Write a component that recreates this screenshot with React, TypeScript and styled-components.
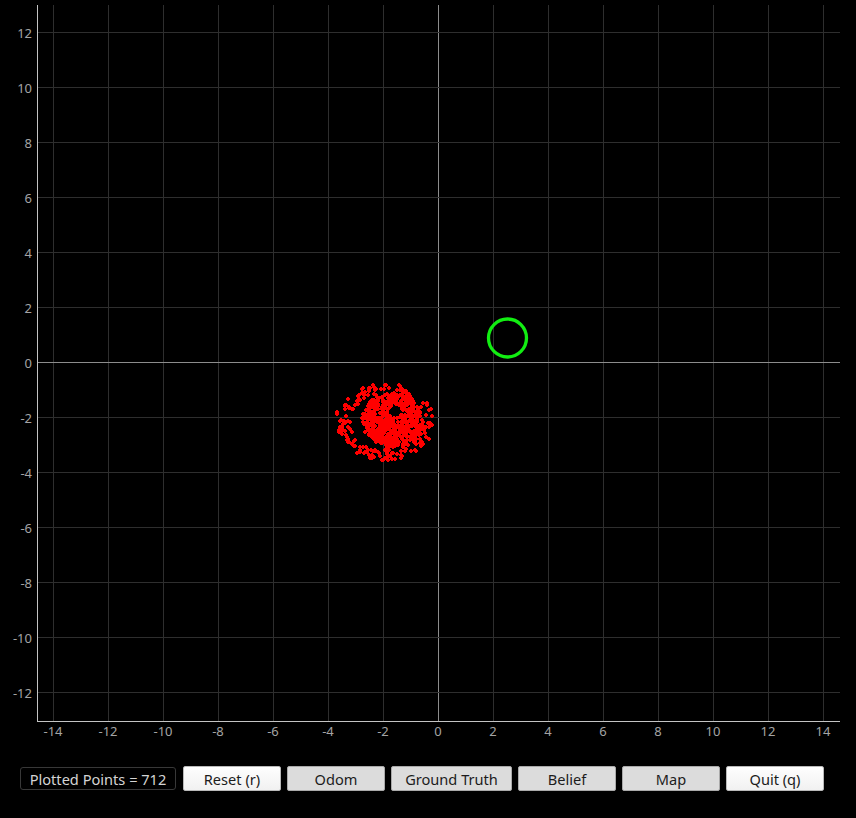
import React, { useMemo } from "react";
import styled, { createGlobalStyle } from "styled-components";

const GlobalStyle = createGlobalStyle`
  html, body {
    margin: 0;
    padding: 0;
    background: #000;
  }
  body {
    font-family: "Noto Sans", "DejaVu Sans", sans-serif;
  }
`;

const Window = styled.div`
  width: 856px;
  height: 818px;
  background: #000;
  display: flex;
  flex-direction: column;
  overflow: hidden;
`;

const PlotSvg = styled.svg`
  display: block;
  flex: 0 0 auto;
`;

const Controls = styled.div`
  display: flex;
  align-items: center;
  gap: 6px;
  padding: 21px 0 0 20px;
`;

const Counter = styled.div`
  box-sizing: border-box;
  width: 156px;
  height: 23px;
  margin-right: 1px;
  border: 1px solid #383838;
  border-radius: 3px;
  color: #d4d4d4;
  font-size: 14.6px;
  display: flex;
  align-items: center;
  justify-content: center;
  white-space: nowrap;
`;

const Button = styled.button<{ $checked?: boolean; $wide?: boolean }>`
  box-sizing: border-box;
  width: ${(p) => (p.$wide ? 121 : 98)}px;
  height: 25px;
  padding: 0;
  border: 1px solid ${(p) => (p.$checked ? "#a9a9a9" : "#b9b9b9")};
  border-radius: 2px;
  background: ${(p) =>
    p.$checked ? "#dcdcdc" : "linear-gradient(#fefefe, #f1f1f1)"};
  color: #1c1c1c;
  font-family: "Noto Sans", "DejaVu Sans", sans-serif;
  font-size: 14.6px;
  white-space: nowrap;
  cursor: pointer;
`;

// plot geometry (pixels)
const X0 = 438.5;
const Y0 = 362.5;
const SCALE = 27.5;
const LEFT = 38;
const RIGHT = 840;
const TOP = 5;
const BOTTOM = 721;

const ticks = [-14, -12, -10, -8, -6, -4, -2, 0, 2, 4, 6, 8, 10, 12, 14];
const yTicks = [-12, -10, -8, -6, -4, -2, 0, 2, 4, 6, 8, 10, 12];

function mulberry32(a: number) {
  return function () {
    a |= 0;
    a = (a + 0x6d2b79f5) | 0;
    let t = Math.imul(a ^ (a >>> 15), 1 | a);
    t = (t + Math.imul(t ^ (t >>> 7), 61 | t)) ^ t;
    return ((t ^ (t >>> 14)) >>> 0) / 4294967296;
  };
}

function buildParticles(): string {
  const rnd = mulberry32(712);
  const pts: [number, number][] = [];
  // sparse outer ring
  for (let i = 0; i < 190; i++) {
    const a = rnd() * Math.PI * 2;
    const r = 0.72 + rnd() * 0.32;
    const x = 385 + Math.cos(a) * 48 * r;
    const y = 422 + Math.sin(a) * 37 * r;
    pts.push([x, y]);
  }
  // dense core, roughly uniform disc with a small hollow
  let n = 0;
  while (n < 522) {
    const a = rnd() * Math.PI * 2;
    const r = Math.sqrt(rnd());
    const x = 392 + Math.cos(a) * 30 * r;
    const y = 420 + Math.sin(a) * 27 * r;
    const dx = x - 395;
    const dy = y - 411;
    if (dx * dx + dy * dy < 42) continue;
    pts.push([x, y]);
    n++;
  }
  return pts
    .map(([x, y]) => {
      const px = Math.round(x);
      const py = Math.round(y);
      return `M${px - 2} ${py - 1}h4v2h-4zM${px - 1} ${py - 2}h2v4h-2z`;
    })
    .join("");
}

function Plot() {
  const particles = useMemo(buildParticles, []);
  const gx = (v: number) => X0 + v * SCALE;
  const gy = (v: number) => Y0 - v * SCALE;
  const labelFont = `"Noto Sans", "DejaVu Sans", sans-serif`;
  return (
    <PlotSvg width={856} height={745} viewBox="0 0 856 745">
      <rect x={LEFT} y={TOP} width={RIGHT - LEFT} height={BOTTOM - TOP} fill="#000" />
      {ticks.map((t) => (
        <line
          key={`vx${t}`}
          x1={gx(t)}
          x2={gx(t)}
          y1={TOP}
          y2={BOTTOM}
          stroke={t === 0 ? "#8c8c8c" : "#2e2e2e"}
          strokeWidth={1}
        />
      ))}
      {yTicks.map((t) => (
        <line
          key={`hy${t}`}
          x1={LEFT}
          x2={RIGHT}
          y1={gy(t)}
          y2={gy(t)}
          stroke={t === 0 ? "#8c8c8c" : "#2e2e2e"}
          strokeWidth={1}
        />
      ))}
      <path d={particles} fill="#ff0000" />
      <circle
        cx={507.5}
        cy={338}
        r={19}
        fill="none"
        stroke="#12ee12"
        strokeWidth={3.3}
      />
      <line x1={37.5} x2={37.5} y1={TOP} y2={BOTTOM + 1} stroke="#c4c4c4" />
      <line x1={37} x2={RIGHT} y1={BOTTOM + 0.5} y2={BOTTOM + 0.5} stroke="#c4c4c4" />
      <g fill="#a4a4a4" fontSize={13} fontFamily={labelFont}>
        {yTicks.map((t) => (
          <text
            key={`ly${t}`}
            x={32}
            y={gy(t)}
            textAnchor="end"
            dominantBaseline="central"
          >
            {t}
          </text>
        ))}
        {ticks.map((t) => (
          <text
            key={`lx${t}`}
            x={gx(t) - 0.5}
            y={731}
            textAnchor="middle"
            dominantBaseline="central"
          >
            {t}
          </text>
        ))}
      </g>
    </PlotSvg>
  );
}

export default function App() {
  return (
    <Window>
      <GlobalStyle />
      <Plot />
      <Controls>
        <Counter>Plotted Points = 712</Counter>
        <Button>Reset (r)</Button>
        <Button $checked>Odom</Button>
        <Button $checked $wide>
          Ground Truth
        </Button>
        <Button $checked>Belief</Button>
        <Button $checked>Map</Button>
        <Button>Quit (q)</Button>
      </Controls>
    </Window>
  );
}
